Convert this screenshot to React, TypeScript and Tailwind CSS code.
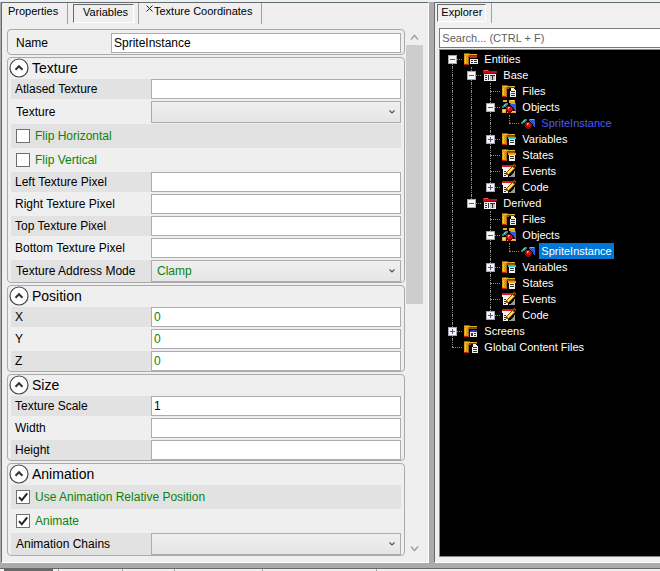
import React, { useState } from "react";

type TextField = { kind: "text"; label: string; value?: string; inherited?: boolean };
type SelectField = { kind: "select"; label: string; value?: string };
type CheckField = { kind: "check"; label: string; checked?: boolean };
type Field = TextField | SelectField | CheckField;

const groups: { title: string; fields: Field[] }[] = [
  {
    title: "Texture",
    fields: [
      { kind: "text", label: "Atlased Texture" },
      { kind: "select", label: "Texture" },
      { kind: "check", label: "Flip Horizontal" },
      { kind: "check", label: "Flip Vertical" },
      { kind: "text", label: "Left Texture Pixel" },
      { kind: "text", label: "Right Texture Pixel" },
      { kind: "text", label: "Top Texture Pixel" },
      { kind: "text", label: "Bottom Texture Pixel" },
      { kind: "select", label: "Texture Address Mode", value: "Clamp" },
    ],
  },
  {
    title: "Position",
    fields: [
      { kind: "text", label: "X", value: "0", inherited: true },
      { kind: "text", label: "Y", value: "0", inherited: true },
      { kind: "text", label: "Z", value: "0", inherited: true },
    ],
  },
  {
    title: "Size",
    fields: [
      { kind: "text", label: "Texture Scale", value: "1" },
      { kind: "text", label: "Width" },
      { kind: "text", label: "Height" },
    ],
  },
  {
    title: "Animation",
    fields: [
      { kind: "check", label: "Use Animation Relative Position", checked: true },
      { kind: "check", label: "Animate", checked: true },
      { kind: "select", label: "Animation Chains" },
    ],
  },
];

type IconName = "entities" | "entity" | "files" | "objects" | "sprite" | "variables" | "states" | "code" | "screens";

type TreeItem = {
  label: string;
  icon: IconName;
  open?: boolean;
  closed?: boolean;
  tone?: "link" | "selected";
  children?: TreeItem[];
};

const entityChildren = (tone: "link" | "selected"): TreeItem[] => [
  { label: "Files", icon: "files" },
  { label: "Objects", icon: "objects", open: true, children: [{ label: "SpriteInstance", icon: "sprite", tone }] },
  { label: "Variables", icon: "variables", closed: true },
  { label: "States", icon: "states" },
  { label: "Events", icon: "code" },
  { label: "Code", icon: "code", closed: true },
];

const tree: TreeItem[] = [
  {
    label: "Entities",
    icon: "entities",
    open: true,
    children: [
      { label: "Base", icon: "entity", open: true, children: entityChildren("link") },
      { label: "Derived", icon: "entity", open: true, children: entityChildren("selected") },
    ],
  },
  { label: "Screens", icon: "screens", closed: true },
  { label: "Global Content Files", icon: "files" },
];

function Folder() {
  return (
    <>
      <path fill="#8f5a08" d="M1 2h6v2h7v2H6v8H1z" />
      <path fill="#d99a16" d="M1 3h5v10H1z" />
      <path fill="#f0c440" d="M2 3h3v1H2zM2 5h1v7H2z" />
      <path fill="#b06c0c" d="M5 5h1v9H5z" />
      <path fill="#e6ac22" d="M6 3h8v1H6z" />
      <path fill="#c01a12" d="M6 4h8v1H6zM1 13h4v1H1z" />
    </>
  );
}

function ListSheet({ accent }: { accent: string }) {
  return (
    <>
      <path fill={accent} d="M7 6h8v2H7z" />
      <path fill="#f4f4f4" d="M8 8h6v6H8z" />
      <path fill="#333" d="M9 9h4v1H9zM9 11h4v1H9z" />
    </>
  );
}

function Shapes() {
  return (
    <>
      <path fill="#17967a" d="M1 7h1V6h1V5h1V4h3v2H6v1H5v1H3v1H1z" />
      <path fill="#7fe0b0" d="M4 5h1v1H4zM3 6h1v1H3z" />
      <path fill="#1f5fe0" d="M9 4h6v8h-1v-1h-1V9h-1V8h-1V7h-1V6H9z" />
      <path fill="#6fb4ff" d="M10 4h4v1h-4z" />
      <path fill="#8a0808" d="M6 7h4v1h1v1h1v3h-1v1h-1v1H7v-1H6v-1H5V8h1z" />
      <path fill="#d31212" d="M6 8h4v1h1v2h-1v1H7v-1H6z" />
      <path fill="#ff9a9a" d="M7 8h2v1H8v1H7z" />
    </>
  );
}

function TreeIcon({ name }: { name: IconName }) {
  return (
    <svg aria-hidden="true" className="h-4 w-4 shrink-0" viewBox="0 0 16 16" shapeRendering="crispEdges">
      {name === "entities" && (
        <>
          <Folder />
          <path fill="#000" d="M6 6h9v8H6z" />
          <path fill="#d8271c" d="M7 5h7v2H7z" />
          <path fill="#f0f0f0" d="M7 8h8v5H7z" />
          <path fill="#333" d="M8 9h2v1H8zM11 9h3v1h-3zM8 11h2v1H8zM11 11h3v1h-3z" />
        </>
      )}
      {name === "entity" && (
        <>
          <path fill="#c00d14" d="M1 3h6v1h8v3H1z" />
          <path fill="#ff4a4a" d="M2 3h4v1H2z" />
          <path fill="#7d0509" d="M1 6h14v1H1z" />
          <path fill="#f2f2f2" d="M2 7h12v7H2z" />
          <path fill="#333" d="M3 8h2v1H3zM3 10h2v1H3zM3 12h2v1H3zM6 8h1v5H6zM8 8h5v1H8zM10 9h1v4h-1z" />
          <path fill="#c4c4c4" d="M8 9h2v4H8zM11 9h2v4h-2z" />
        </>
      )}
      {name === "files" && (
        <>
          <Folder />
          <path fill="#000" d="M8 5h7v9H8z" />
          <path fill="#f4f4f4" d="M10 5h3v1h1v1h1v7h-6V8h1z" />
          <path fill="#333" d="M10 8h4v1h-4zM10 10h4v1h-4zM10 12h4v1h-4z" />
        </>
      )}
      {name === "objects" && (
        <>
          <path fill="#e3ae25" d="M2 1h4v2H2zM8 1h6v3H8zM1 10h4v4H1zM6 12h9v2H6z" />
          <path fill="#f7d95c" d="M9 1h4v1H9zM2 11h2v2H2zM11 12h3v1h-3z" />
          <Shapes />
        </>
      )}
      {name === "sprite" && <Shapes />}
      {(name === "variables" || name === "states" || name === "screens") && (
        <>
          <Folder />
          <path fill="#000" d="M7 6h8v8H7z" />
          {name === "variables" && <ListSheet accent="#27c4dc" />}
          {name === "states" && <ListSheet accent="#e8a21c" />}
          {name === "screens" && (
            <>
              <path fill="#f0f0f0" d="M7 7h7v7H7z" />
              <path fill="#2438c8" d="M7 7h7v2H7z" />
              <path fill="#333" d="M8 10h2v3H8zM11 10h2v1h-2zM11 12h2v1h-2z" />
            </>
          )}
        </>
      )}
      {name === "code" && (
        <>
          <path fill="#f4f4f4" d="M1 4h11v2h-1v2H7v6H2V6H1z" />
          <path fill="#e01515" d="M1 2h11v2H1z" />
          <path fill="#333" d="M3 8h2v1H3zM3 10h2v1H3zM3 12h2v1H3z" />
          <path fill="#9b9b9b" d="M8 13h2v-1h1v-1h1v-1h1V8h1v6H8z" />
          <path fill="#7a5208" d="M5 12V9h1V8h1V7h1V6h1V5h1V4h1V3h2v1h1v2h-1v1h-1v1h-1v1h-1v1H9v1H8v1z" />
          <path fill="#ffdf2e" d="M6 10V9h1V8h1V7h1V6h1V5h1V4h1v1h1v1h-1v1h-1v1h-1v1H9v1H8v1H7v-1z" />
          <path fill="#e01515" d="M12 1h2v1h1v2h-1V3h-2z" />
        </>
      )}
    </svg>
  );
}

/* One 19px column of guide lines: a dotted stem, and for the last column a dotted arm to the icon. */
function Guide({ up, down, arm }: { up: boolean; down: boolean; arm: boolean }) {
  const line = "border-[#8c8c8c] border-dotted";
  return (
    <span className="flex w-[19px] shrink-0 flex-col pl-[9px]">
      <span className={`h-2 ${line} ${up ? "border-l" : ""}`} />
      <span className={`h-2 ${line} ${arm ? "border-t" : ""} ${down ? "border-l" : ""}`} />
    </span>
  );
}

function TreeRow({ item, trail, first, last }: { item: TreeItem; trail: boolean[]; first: boolean; last: boolean }) {
  const [open, setOpen] = useState(Boolean(item.open));
  const expandable = item.open || item.closed;
  const tone =
    item.tone === "selected" ? "bg-[#0078d7] text-white" : item.tone === "link" ? "text-[#4b5cf0]" : "text-white";
  return (
    <li>
      <div className="flex h-4">
        {trail.map((more, i) => (
          <Guide key={i} up={more} down={more} arm={false} />
        ))}
        <span className="relative flex">
          <Guide up={!first} down={!last} arm />
          {expandable && (
            <button
              type="button"
              aria-label={`${open ? "Collapse" : "Expand"} ${item.label}`}
              onClick={() => setOpen(!open)}
              className="absolute top-1 left-[5px] flex h-[9px] w-[9px] items-center justify-center border border-[#a8a8a8] bg-[#f8f8f8]"
            >
              <svg viewBox="0 0 7 7" className="h-[7px] w-[7px] shrink-0" shapeRendering="crispEdges">
                <path fill="#4458b0" d={open ? "M1 3h5v1H1z" : "M1 3h5v1H1zM3 1h1v5H3z"} />
              </svg>
            </button>
          )}
        </span>
        <span className="flex w-5 shrink-0 pl-px">
          <TreeIcon name={item.icon} />
        </span>
        <span className={`px-0.5 leading-4 whitespace-nowrap ${tone}`}>{item.label}</span>
      </div>
      {open && item.children && <Branch items={item.children} trail={[...trail, !last]} />}
    </li>
  );
}

function Branch({ items, trail }: { items: TreeItem[]; trail: boolean[] }) {
  return (
    <ul>
      {items.map((item, i) => (
        <TreeRow
          key={item.label}
          item={item}
          trail={trail}
          first={trail.length === 0 && i === 0}
          last={i === items.length - 1}
        />
      ))}
    </ul>
  );
}

function FieldRow({ field, shaded }: { field: Field; shaded: boolean }) {
  const id = field.label.toLowerCase().replace(/ /g, "-");
  const band = shaded ? "bg-[#e2e2e2]" : "";

  if (field.kind === "check") {
    return (
      <div className={`flex h-6 items-center gap-[5px] pl-[5px] text-[#0b820b] ${band}`}>
        <span className="relative flex">
          <input
            id={id}
            type="checkbox"
            defaultChecked={field.checked}
            className="peer h-3.5 w-3.5 appearance-none border border-[#707070] bg-white"
          />
          <svg
            aria-hidden="true"
            viewBox="0 0 14 14"
            className="pointer-events-none absolute inset-0 hidden h-3.5 w-3.5 peer-checked:block"
          >
            <path d="M3 7.2 5.8 10.3 11.2 3.4" fill="none" stroke="#212121" strokeWidth="2" />
          </svg>
        </span>
        <label htmlFor={id}>{field.label}</label>
      </div>
    );
  }

  if (field.kind === "select") {
    return (
      <div className="pb-px last:pb-0">
        <div className={`flex h-[22px] items-center ${band}`}>
          <label htmlFor={id} className="w-[140px] shrink-0 pl-[5px] whitespace-nowrap">
            {field.label}
          </label>
          <span className="relative flex h-full flex-1">
            <select
              id={id}
              defaultValue={field.value ?? ""}
              className="h-full w-full appearance-none border border-[#acacac] bg-linear-to-b from-[#f0f0f0] to-[#e5e5e5] pl-[5px] text-[#0b820b]"
            >
              <option value={field.value ?? ""}>{field.value ?? ""}</option>
            </select>
            <svg
              aria-hidden="true"
              viewBox="0 0 6 4"
              className="pointer-events-none absolute top-[9px] right-1.5 h-1 w-1.5"
            >
              <path d="M.5 .5 3 3 5.5 .5" fill="none" stroke="#555" strokeWidth="1.2" />
            </svg>
          </span>
        </div>
      </div>
    );
  }

  return (
    <div className="pb-0.5 last:pb-0">
      <div className={`flex h-5 items-center ${band}`}>
        <label htmlFor={id} className="w-[140px] shrink-0 pl-1 whitespace-nowrap">
          {field.label}
        </label>
        <input
          id={id}
          type="text"
          defaultValue={field.value ?? ""}
          className={`h-full min-w-0 flex-1 border border-[#abadb3] bg-white px-0.5 ${field.inherited ? "text-[#0b820b]" : "text-black"}`}
        />
      </div>
    </div>
  );
}

function Group({ title, fields }: { title: string; fields: Field[] }) {
  const [open, setOpen] = useState(true);
  return (
    <section className="rounded border border-[#aaa] px-[3px]">
      <h2 className="h-[21px] text-sm leading-5">
        <button
          type="button"
          aria-expanded={open}
          onClick={() => setOpen(!open)}
          className="-ml-0.5 flex items-center gap-[3px]"
        >
          <svg aria-hidden="true" viewBox="0 0 20 20" className="h-5 w-5">
            <circle cx="10" cy="10" r="9" fill="#fff" stroke="#444" strokeWidth="1.2" />
            <path d="M6.5 11.8 10 8.2 13.5 11.8" fill="none" stroke="#333" strokeWidth="2" />
          </svg>
          {title}
        </button>
      </h2>
      {open && (
        <div>
          {fields.map((field, i) => (
            <FieldRow key={field.label} field={field} shaded={i % 2 === 0} />
          ))}
        </div>
      )}
    </section>
  );
}

const tabDivider = "border-r border-[#a0a0a0]";
const pressedTab = "border border-t-[#696969] border-l-[#696969] border-r-white border-b-white";

function PropertyPanel() {
  return (
    <section className="flex w-[65%] shrink-0 flex-col border-t border-r border-b border-l border-t-[#696969] border-r-white border-b-white border-l-[#696969] bg-[#efefef]">
      <nav className="flex h-[21px] shrink-0 text-[11px] leading-[17px]">
        <button type="button" className={`flex w-[66px] pl-1.5 ${tabDivider}`}>
          Properties
        </button>
        <div className={`flex w-[71px] pt-px pb-px pl-[5px] ${tabDivider}`}>
          <button type="button" className={`flex w-[61px] pl-[9px] leading-[15px] ${pressedTab}`}>
            Variables
          </button>
        </div>
        <button type="button" className={`flex w-[123px] pl-[7px] ${tabDivider}`}>
          <svg aria-hidden="true" viewBox="0 0 7 7" className="mt-0.5 mr-px h-[7px] w-[7px]">
            <path d="M.5 .5 6.5 6.5M6.5 .5 .5 6.5" stroke="#222" strokeWidth="1" />
          </svg>
          <span className="whitespace-nowrap">Texture Coordinates</span>
        </button>
      </nav>
      <div className="flex min-h-0 flex-1 gap-px px-[5px] pt-[5px] pb-[5px]">
        <div className="flex min-w-0 flex-1 flex-col overflow-hidden">
          <div className="flex shrink-0 flex-col gap-0.5 text-xs">
            <div className="flex h-[26px] items-center rounded border border-[#aaa] px-[3px] pt-0.5">
              <label htmlFor="name" className="w-[100px] shrink-0 pl-[5px]">
                Name
              </label>
              <input
                id="name"
                type="text"
                defaultValue="SpriteInstance"
                className="h-5 min-w-0 flex-1 border border-[#abadb3] bg-white px-0.5"
              />
            </div>
            {groups.map((group) => (
              <Group key={group.title} title={group.title} fields={group.fields} />
            ))}
          </div>
        </div>
        <div className="flex w-[17px] shrink-0 flex-col items-center">
          <svg aria-hidden="true" viewBox="0 0 17 16" className="h-4 w-[17px] shrink-0">
            <path d="M5 10.5 8.5 6.5 12 10.5" fill="none" stroke="#a3a3a3" strokeWidth="1.5" />
          </svg>
          <div className="h-[49%] w-full bg-[#cdcdcd]" />
          <svg aria-hidden="true" viewBox="0 0 17 16" className="mt-auto h-4 w-[17px] shrink-0">
            <path d="M5 5.5 8.5 9.5 12 5.5" fill="none" stroke="#a3a3a3" strokeWidth="1.5" />
          </svg>
        </div>
      </div>
    </section>
  );
}

function ExplorerPanel() {
  return (
    <section className="flex min-w-0 flex-1 flex-col border-t border-b border-l border-t-[#696969] border-b-white border-l-[#696969] bg-[#f0f0f0] text-[11px]">
      <nav className="flex h-5 shrink-0">
        <div className={`flex w-[57px] py-px pl-0.5 ${tabDivider}`}>
          <button type="button" className={`flex w-[49px] pl-[3px] leading-[15px] ${pressedTab}`}>
            Explorer
          </button>
        </div>
      </nav>
      <div className="flex min-h-0 flex-1 flex-col gap-px pt-[5px] pb-[5px] pl-1">
        <input
          type="text"
          aria-label="Search"
          placeholder="Search... (CTRL + F)"
          className="h-5 w-full shrink-0 border border-r-0 border-[#7a7a7a] bg-white px-0.5 placeholder:text-[#5f5f5f]"
        />
        <div className="min-h-0 flex-1 overflow-hidden border border-r-0 border-[#828790] bg-black pt-px pl-[3px]">
          <Branch items={tree} trail={[]} />
        </div>
      </div>
    </section>
  );
}

export default function App() {
  return (
    <main className="flex h-screen flex-col bg-[#ababab] font-['Liberation_Sans',Arial,sans-serif] text-black">
      <div className="h-0.5 shrink-0 bg-[#e6f0f5]" />
      <div className="flex min-h-0 flex-1 gap-[5px] pl-px">
        <PropertyPanel />
        <ExplorerPanel />
      </div>
      <div className="mt-[5px] flex h-[3px] shrink-0 border-t border-[#696969] bg-[#f0f0f0] pl-1">
        <div className="w-[49px] bg-[#696969]" />
        <div className="w-1.5 border-r border-[#a0a0a0]" />
        <div className="w-16 border-r border-[#a0a0a0]" />
        <div className="w-[52px] border-r border-[#a0a0a0]" />
        <div className="w-[88px] border-r border-[#a0a0a0]" />
        <div className="w-[114px] border-r border-[#a0a0a0]" />
      </div>
    </main>
  );
}
